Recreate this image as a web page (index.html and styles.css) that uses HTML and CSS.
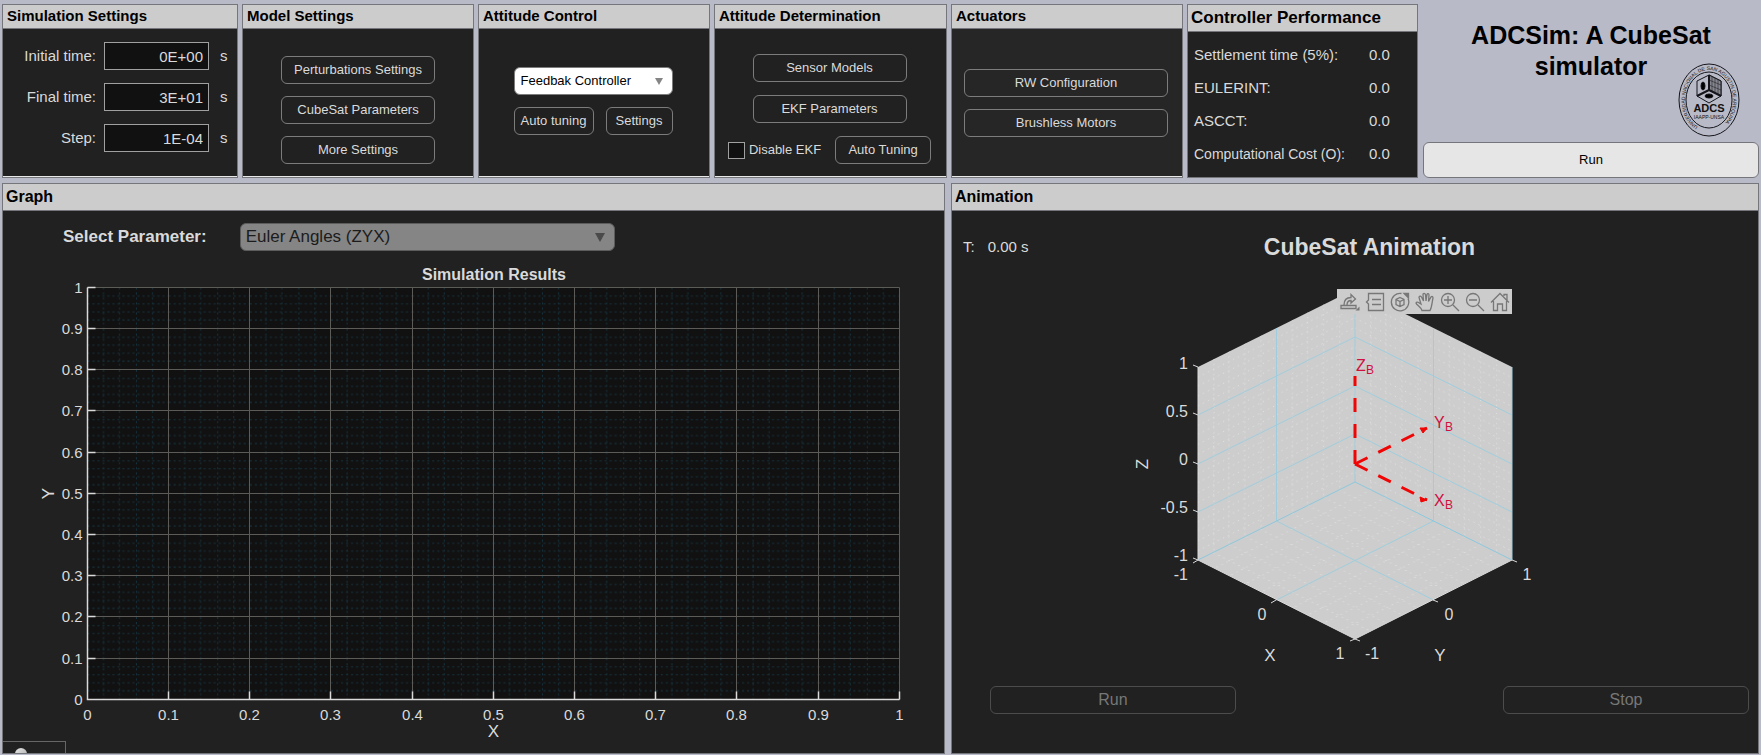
FILE: index.html
```html
<!DOCTYPE html>
<html lang="en">
<head>
<meta charset="utf-8">
<meta name="viewport" content="width=device-width, initial-scale=1">
<title>ADCSim: A CubeSat simulator</title>
<link rel="stylesheet" href="styles.css">
</head>
<body>
<div class="top">
  <section class="panel">
    <h2 class="panel-title">Simulation Settings</h2>
    <div class="panel-body times">
      <label for="t0">Initial time:</label><input class="field" id="t0" type="text" value="0E+00"><span>s</span>
      <label for="tf">Final time:</label><input class="field" id="tf" type="text" value="3E+01"><span>s</span>
      <label for="step">Step:</label><input class="field" id="step" type="text" value="1E-04"><span>s</span>
    </div>
  </section>

  <section class="panel">
    <h2 class="panel-title">Model Settings</h2>
    <div class="panel-body stack model">
      <button class="btn" type="button">Perturbations Settings</button>
      <button class="btn" type="button">CubeSat Parameters</button>
      <button class="btn" type="button">More Settings</button>
    </div>
  </section>

  <section class="panel">
    <h2 class="panel-title">Attitude Control</h2>
    <div class="panel-body stack control">
      <div class="drop">
        <select class="select" aria-label="Controller"><option>Feedbak Controller</option></select>
      </div>
      <div class="pair">
        <button class="btn btn-tuning" type="button">Auto tuning</button>
        <button class="btn btn-settings" type="button">Settings</button>
      </div>
    </div>
  </section>

  <section class="panel">
    <h2 class="panel-title">Attitude Determination</h2>
    <div class="panel-body stack determination">
      <button class="btn" type="button">Sensor Models</button>
      <button class="btn" type="button">EKF Parameters</button>
      <div class="ekf-row">
        <label class="check"><input type="checkbox">Disable EKF</label>
        <button class="btn btn-auto" type="button">Auto Tuning</button>
      </div>
    </div>
  </section>

  <section class="panel panel-actuators">
    <h2 class="panel-title">Actuators</h2>
    <div class="panel-body stack actuators">
      <button class="btn" type="button">RW Configuration</button>
      <button class="btn" type="button">Brushless Motors</button>
    </div>
  </section>

  <section class="panel panel-plain">
    <h2 class="panel-title panel-title-large">Controller Performance</h2>
    <dl class="panel-body metrics">
      <dt>Settlement time (5%):</dt><dd>0.0</dd>
      <dt>EULERINT:</dt><dd>0.0</dd>
      <dt>ASCCT:</dt><dd>0.0</dd>
      <dt class="small">Computational Cost (O):</dt><dd>0.0</dd>
    </dl>
  </section>

  <header class="brand">
    <h1 class="app-title">ADCSim: A CubeSat<br>simulator</h1>
    <svg class="logo" viewBox="0 0 62 74" aria-label="ADCS logo" role="img">
      <defs>
        <path id="ring" d="M20 63.700A24 30 0 1 1 42 63.700"/>
      </defs>
      <ellipse cx="31" cy="37" rx="30" ry="36" fill="none" stroke="#15151b" stroke-width="1"/>
      <ellipse cx="31" cy="37" rx="23" ry="28" fill="none" stroke="#15151b" stroke-width="1"/>
      <text class="logo-ring"><textPath href="#ring">UNIVERSIDAD NACIONAL DE SAN AGUSTIN DE AREQUIPA</textPath></text>
      <g stroke="#15151b" stroke-width="1" stroke-linejoin="round">
        <path d="M19 18L31 12L43 18V33L31 40L19 33Z" fill="#b8bac7"/>
        <path d="M31 12L43 18V33L31 27Z" fill="#85868f"/>
        <path d="M34 14V28M37 15V30M40 17V31M31 17L43 22M31 22L43 27" stroke-width="0.500" fill="none"/>
        <path d="M31 12V27L19 33M31 27L43 33" fill="none" stroke-width="2"/>
        <ellipse cx="25" cy="23" rx="2" ry="4" fill="#000"/>
        <ellipse cx="31" cy="33" rx="4" ry="2" fill="#000"/>
      </g>
      <text class="logo-name" x="31" y="49">ADCS</text>
      <text class="logo-sub" x="31" y="56">IAAPP-UNSA</text>
    </svg>
    <button class="run-main" type="button">Run</button>
  </header>
</div>

<main class="bottom">
  <section class="panel panel-plain graph">
    <h2 class="panel-title panel-title-wide">Graph</h2>
    <div class="parameter">
      <label for="param">Select Parameter:</label>
      <div class="drop drop-muted">
        <select class="select select-muted" id="param"><option>Euler Angles (ZYX)</option></select>
      </div>
    </div>
    <svg class="plot" viewBox="0 0 941 498" role="img" aria-label="Simulation Results">
      <defs>
        <pattern id="minor" width="81.200" height="41.200" patternUnits="userSpaceOnUse">
          <path class="minor" d="M16 0V42M32 0V42M49 0V42M65 0V42M0 8.500H82M0 16.500H82M0 24.500H82M0 32.500H82"/>
        </pattern>
      </defs>
      <text class="plot-title" x="491" y="25">Simulation Results</text>
      <g transform="translate(84.500 32.500)">
        <rect width="812" height="412" fill="#111"/>
        <rect width="812" height="412" fill="url(#minor)"/>
        <path class="major" d="M81 0V412M162 0V412M243 0V412M325 0V412M406 0V412M487 0V412M568 0V412M649 0V412M731 0V412M812 0V412M0 0H812M0 41H812M0 82H812M0 123H812M0 165H812M0 206H812M0 247H812M0 288H812M0 329H812M0 371H812"/>
        <path class="axis" d="M0 0V412H812M81 412v-8M162 412v-8M243 412v-8M325 412v-8M406 412v-8M487 412v-8M568 412v-8M649 412v-8M731 412v-8M812 412v-8M0 0h8M0 41h8M0 82h8M0 123h8M0 165h8M0 206h8M0 247h8M0 288h8M0 329h8M0 371h8"/>
        <g class="tick tick-end">
          <text x="-5" y="5">1</text><text x="-5" y="46">0.9</text><text x="-5" y="87">0.8</text><text x="-5" y="128">0.7</text><text x="-5" y="170">0.6</text><text x="-5" y="211">0.5</text><text x="-5" y="252">0.4</text><text x="-5" y="293">0.3</text><text x="-5" y="334">0.2</text><text x="-5" y="376">0.1</text><text x="-5" y="417">0</text>
        </g>
        <g class="tick">
          <text x="0" y="432">0</text><text x="81" y="432">0.1</text><text x="162" y="432">0.2</text><text x="243" y="432">0.3</text><text x="325" y="432">0.4</text><text x="406" y="432">0.5</text><text x="487" y="432">0.6</text><text x="568" y="432">0.7</text><text x="649" y="432">0.8</text><text x="731" y="432">0.9</text><text x="812" y="432">1</text>
        </g>
        <text class="axis-name" x="406" y="449">X</text>
        <text class="axis-name" transform="translate(-34 206) rotate(-90)">Y</text>
      </g>
    </svg>
    <div class="lamp-box"><span class="lamp"></span></div>
  </section>

  <section class="panel panel-plain animation">
    <h2 class="panel-title panel-title-wide">Animation</h2>
    <div class="anim-head">
      <div class="clock"><span>T:</span><output>0.00 s</output></div>
      <h3 class="anim-title">CubeSat Animation</h3>
    </div>
    <div class="scene">
      <svg class="scene-plot" viewBox="0 0 806 410" role="img" aria-label="CubeSat Animation axes">
        <defs>
          <pattern id="wall-l" width="78.500" height="48.250" patternUnits="userSpaceOnUse" patternTransform="matrix(1 -0.500 0 1 246 97)">
            <path class="dots" d="M16 0V49M31 0V49M47 0V49M63 0V49M0 10H79M0 19H79M0 29H79M0 39H79"/>
          </pattern>
          <pattern id="wall-r" width="78.500" height="48.250" patternUnits="userSpaceOnUse" patternTransform="matrix(1 0.500 0 1 403 19)">
            <path class="dots" d="M16 0V49M31 0V49M47 0V49M63 0V49M0 10H79M0 19H79M0 29H79M0 39H79"/>
          </pattern>
          <pattern id="floor" width="78.500" height="78.500" patternUnits="userSpaceOnUse" patternTransform="matrix(1 0.500 -1 0.500 403 212)">
            <path class="dots" d="M16 0V79M31 0V79M47 0V79M63 0V79M0 16H79M0 31H79M0 47H79M0 63H79"/>
          </pattern>
        </defs>
        <path d="M246 97L403 19L560 97V290L403 369L246 290Z" fill="#cdcdcd"/>
        <path d="M246 97L403 19V212L246 290Z" fill="url(#wall-l)"/>
        <path d="M403 19L560 97V290L403 212Z" fill="url(#wall-r)"/>
        <path d="M403 212L560 290L403 369L246 290Z" fill="url(#floor)"/>
        <path class="grid3d" d="M246 145L403 67L560 145M246 194L403 116L560 194M246 242L403 164L560 242M324.500 58V251L481.500 330M481.500 58V251L324.500 330M403 19V212M560 97V290"/>
        <path class="edge3d" d="M246 290L403 212L560 290"/>
        <path class="rim" d="M246 97V290L403 369L560 290M246 97l-5-2M246 145l-5-2M246 194l-5-2M246 242l-5-2M246 290l-5-2M246 290l-5 3M324 330l-5 3M403 369l-5 2M403 369l5 2M481 330l5 2M560 290l5 2"/>
        <g class="vector">
          <path d="M403 194V106"/>
          <path d="M403 194L475 158"/>
          <path d="M403 194L475 230"/>
          <path class="tip" d="M468 158l7 0l-4 5zM468 227l7 3l-6 2z"/>
        </g>
        <g class="frame-name">
          <text x="404" y="101">Z</text><text class="sub" x="414" y="104">B</text>
          <text x="482" y="158">Y</text><text class="sub" x="493" y="161">B</text>
          <text x="482" y="236">X</text><text class="sub" x="493" y="239">B</text>
        </g>
        <g class="tick tick-large tick-end">
          <text x="236" y="99">1</text><text x="236" y="147">0.5</text><text x="236" y="195">0</text><text x="236" y="243">-0.5</text><text x="236" y="291">-1</text><text x="236" y="310">-1</text>
        </g>
        <g class="tick tick-large">
          <text x="310" y="350">0</text><text x="388" y="389">1</text><text x="420" y="389">-1</text><text x="497" y="350">0</text><text x="575" y="310">1</text>
        </g>
        <text class="axis-name" x="318" y="391">X</text>
        <text class="axis-name" x="488" y="391">Y</text>
        <text class="axis-name" transform="translate(196 194) rotate(-90)">Z</text>
      </svg>
      <div class="toolbar">
        <button type="button" aria-label="Export"><svg viewBox="0 0 20 20"><path d="M1 13.500h15v3H1zM4 13C4 8 7 5.500 11 5.500V2.500l4.500 4.500L11 11V8.500C8 8.500 7 10 7 13"/><path d="M19.500 14.500v4h-4z" fill="#777" stroke="none"/></svg></button>
        <button type="button" aria-label="Data tips"><svg viewBox="0 0 20 20"><path d="M3.500 1.500h15v17h-15V12l-2-2l2-2zM7 7.500h9M7 12.500h9"/></svg></button>
        <button type="button" aria-label="Rotate 3D"><svg viewBox="0 0 20 20"><path d="M11.500 1.500A8.700 8.700 0 1 0 18 6.500"/><path d="M14 1.500h4.500V6z" fill="#777"/><path d="M10 5.500l4 2v5l-4 2-4-2v-5zM6 7.500l4 2l4-2M10 9.500v5"/></svg></button>
        <button type="button" aria-label="Pan"><svg viewBox="0 0 20 20"><path d="M7 18.500c-1-3-3-4-5.500-6.500c-1-1.500.5-2.500 2-1.500L6 12L4 5.500c0-1.500 1.500-2 2.500-.5L8.500 9L8 2.500c0-1.500 2-1.500 2.500 0L11 9l1-6.500c.5-1.500 2-1 2 .5L13.500 9.500L16 5c1-1 2-.5 2 1c-1 4-1 9-3 12.500z"/></svg></button>
        <button type="button" aria-label="Zoom in"><svg viewBox="0 0 20 20"><circle cx="8" cy="8" r="6.500"/><path d="M13 13l6 6M4 8h8M8 4v8"/></svg></button>
        <button type="button" aria-label="Zoom out"><svg viewBox="0 0 20 20"><circle cx="8" cy="8" r="6.500"/><path d="M13 13l6 6M4 8h8"/></svg></button>
        <button type="button" aria-label="Restore view"><svg viewBox="0 0 20 20"><path d="M1 10.500L10 1.500l9 9M3.500 9v9.500h4V12h5v6.500h4V9M14 4V2.500h3V8"/></svg></button>
      </div>
    </div>
    <div class="anim-actions">
      <button class="btn btn-anim" type="button" disabled>Run</button>
      <button class="btn btn-anim" type="button" disabled>Stop</button>
    </div>
  </section>
</main>
</body>
</html>
```

FILE: styles.css
```css
* { box-sizing: border-box; }

body {
  margin: 0;
  padding: 4px 2px 0;
  background: #b8bac7;
  color: #dadada;
  font-family: "Liberation Sans", Arial, sans-serif;
  font-size: 15px;
  line-height: 18px;
}

button, input, select { font: inherit; margin: 0; }
h1, h2, h3, dl, dd { margin: 0; }

.top {
  display: grid;
  grid-template-columns: 236fr 232fr 232fr 233fr 232fr 231fr 337fr;
  gap: 4px;
  margin-bottom: 5px;
}

.bottom {
  display: grid;
  grid-template-columns: 943fr 808fr;
  gap: 6px;
}

.panel {
  display: flex;
  flex-direction: column;
  min-width: 0;
  background: #212121;
  border: 1px solid #75767c;
  box-shadow: inset 0 -1px #e8e8e8;
}
.panel-plain { box-shadow: none; }
.panel-actuators { background: #262626; }

.panel-title {
  padding: 2px 4px 3px;
  background: #ccc;
  border-bottom: 1px solid #75767c;
  color: #000;
  font-size: 15px;
  line-height: 18px;
}
.panel-title-large { font-size: 17px; line-height: 21px; padding-left: 3px; }
.panel-title-wide { font-size: 16px; line-height: 21px; padding-left: 3px; }
.panel-body { flex: 1; }

.btn {
  height: 28px;
  padding: 0;
  background: transparent;
  border: 1px solid #7c7c7c;
  border-radius: 6px;
  color: #dadada;
  font-size: 13px;
}

/* Simulation settings */
.times {
  display: grid;
  grid-template-columns: 1fr 105px 20px;
  grid-auto-rows: 28px;
  gap: 13px 8px;
  align-items: center;
  align-content: start;
  padding: 13px 0 25px;
}
.times label { text-align: right; }
.times span { padding-left: 3px; }
.field {
  width: 100%;
  height: 28px;
  padding: 0 5px;
  background: #111;
  border: 1px solid #a0a0a0;
  color: #dadada;
  text-align: right;
}

/* Button columns */
.stack {
  display: flex;
  flex-direction: column;
  align-items: center;
  gap: 12px;
}
.stack > .btn { width: 154px; }
.model { padding-top: 27px; }
.control { padding: 38px 2px 0 0; }
.determination { gap: 13px; padding: 25px 2px 0 0; }
.actuators { padding: 40px 14px 0 12px; }
.actuators > .btn { width: 100%; }

.pair { display: flex; gap: 12px; }
.btn-tuning { width: 80px; }
.btn-settings { width: 67px; }

.ekf-row {
  display: flex;
  align-items: center;
  gap: 14px;
  font-size: 13px;
}
.check { display: flex; align-items: center; gap: 4px; }
.check input {
  appearance: none;
  width: 17px;
  height: 17px;
  background: #111;
  border: 1px solid #a0a0a0;
}
.btn-auto { width: 96px; }

.drop { position: relative; width: 159px; }
.drop::after {
  content: "";
  position: absolute;
  right: 10px;
  top: 11px;
  border: 4px solid transparent;
  border-top: 7px solid #858585;
  border-bottom: 0;
  pointer-events: none;
}
.select {
  appearance: none;
  display: block;
  width: 100%;
  height: 28px;
  padding: 0 6px;
  background: #fff;
  border: 1px solid #7c7c7c;
  border-radius: 6px;
  color: #000;
  font-size: 13px;
}

/* Controller performance */
.metrics {
  display: grid;
  grid-template-columns: 1fr 48px;
  grid-auto-rows: 33px;
  align-items: center;
  padding: 6px 0 6px 6px;
}
.metrics .small { font-size: 14px; }

/* Brand and main run button */
.brand {
  position: relative;
  display: flex;
  flex-direction: column;
  justify-content: space-between;
  padding-left: 1px;
}
.app-title {
  padding-top: 16px;
  color: #000;
  font-size: 25px;
  line-height: 31px;
  text-align: center;
}
.logo {
  position: absolute;
  right: 19px;
  bottom: 41px;
  width: 62px;
  height: 74px;
}
.logo text { font-family: "Liberation Sans", Arial, sans-serif; fill: #111; }
.logo-ring { font-size: 5px; }
.logo .logo-name { font-size: 11px; font-weight: bold; text-anchor: middle; }
.logo .logo-sub { font-size: 5px; text-anchor: middle; }
.run-main {
  height: 36px;
  background: #e6e6e6;
  border: 1px solid #75767c;
  border-radius: 6px;
  color: #000;
  font-size: 13px;
}

/* Graph */
.graph { position: relative; overflow: hidden; }
.parameter {
  display: flex;
  align-items: center;
  gap: 33px;
  height: 44px;
  padding: 8px 60px 0;
  font-size: 17px;
}
.parameter label { font-weight: bold; }
.parameter .drop { width: 375px; }
.select-muted {
  padding: 0 5px;
  background: #858585;
  border-color: #5c5c5c;
  color: #1c1c1c;
  font-size: 17px;
}
.drop-muted::after { border-width: 9px 5px 0; border-top-color: #4a4a4a; top: 10px; }

.plot, .scene-plot { display: block; width: 100%; height: auto; }
.plot-title { font-size: 16px; font-weight: bold; fill: #dadada; text-anchor: middle; }
.minor { fill: none; stroke: #15323d; stroke-width: 1; stroke-dasharray: 2 3; }
.major { fill: none; stroke: #5d5b58; stroke-width: 1; }
.axis { fill: none; stroke: #dadada; stroke-width: 1.5; }
.tick { fill: #dadada; font-size: 15px; text-anchor: middle; }
.tick-end { text-anchor: end; }
.tick-large { font-size: 16px; }
.axis-name { fill: #dadada; font-size: 17px; text-anchor: middle; }

.lamp-box {
  position: absolute;
  left: 0;
  bottom: 0;
  width: 63px;
  height: 12px;
  overflow: hidden;
  border: 1px solid #666;
  border-width: 1px 1px 0 0;
}
.lamp {
  display: block;
  width: 12px;
  height: 12px;
  margin: 6px 0 0 12px;
  border-radius: 50%;
  background: linear-gradient(135deg, #e8e8e8, #a8a8a8);
}

/* Animation */
.anim-head {
  display: grid;
  grid-template-columns: 68px 1fr;
  align-items: center;
  height: 59px;
  padding: 12px 50px 0 11px;
}
.clock { display: flex; gap: 13px; font-size: 15px; }
.anim-title { font-size: 23px; line-height: 28px; text-align: center; }
.scene { position: relative; }
.grid3d { fill: none; stroke: #a0cddd; stroke-width: 1; }
.edge3d { fill: none; stroke: #8cc8dd; stroke-width: 1; }
.rim { fill: none; stroke: #dadada; stroke-width: 1; }
.dots { fill: none; stroke: #e2e2e2; stroke-width: 1; stroke-dasharray: 1 4; }
.vector { fill: none; stroke: #f00505; stroke-width: 3; stroke-dasharray: 14 12; }
.vector .tip { fill: #f00505; stroke-dasharray: none; stroke-width: 1; }
.frame-name { fill: #cf1040; font-size: 16px; }
.frame-name .sub { font-size: 12px; }

.toolbar {
  position: absolute;
  left: 47.8%;
  top: 19px;
  display: flex;
  background: #ccc;
}
.toolbar button {
  width: 25px;
  height: 25px;
  padding: 3px;
  background: none;
  border: 0;
}
.toolbar svg {
  display: block;
  width: 20px;
  height: 20px;
  fill: none;
  stroke: #777;
  stroke-width: 1.3;
}

.anim-actions {
  display: flex;
  justify-content: space-between;
  padding: 6px 9px 39px 38px;
}
.btn-anim {
  width: 246px;
  border-color: #4c4c4c;
  color: #777;
  font-size: 16px;
}
```
